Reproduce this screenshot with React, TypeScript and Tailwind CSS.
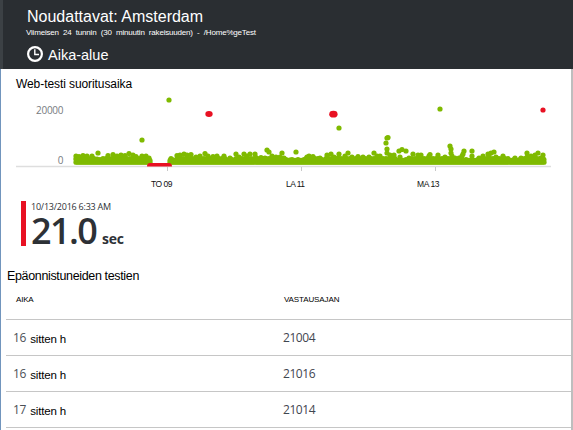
const ARIAL = "font-['Liberation_Sans',Arial,sans-serif]";
const SEGOE = "font-['Open_Sans','Noto_Sans',sans-serif]";

// Upper edge of the dense band of passing samples: [x, y]
const bumps: [number, number][] = [
  [76, 156], [79, 156.5], [83, 155.5], [87, 156], [92, 156], [98, 153], [97, 159], [103, 158.5], [108, 155.5], [113, 154.5],
  [117, 156], [121, 155], [125, 155.5], [129, 153.5], [133, 155], [136, 156.5], [142, 156], [146, 156], [149, 158],
  [171, 158.5], [177, 155.5], [180, 155], [184, 154], [187, 155], [191, 154.5], [196, 157], [200, 156], [205, 153.5],
  [208, 156], [213, 156.5], [217, 156], [224, 156], [230, 158], [236, 154], [239, 157], [244, 154], [247, 156],
  [250, 154], [255, 154], [256, 157.5], [261, 157.5], [265, 158], [267, 150], [269, 152], [272, 156], [276, 157],
  [282, 153], [280, 157], [284, 158], [296, 152], [290, 160], [307, 157], [309, 156], [313, 156.5], [320, 158],
  [327, 155], [331, 154], [334, 157], [339, 154], [338, 158], [345, 156], [348, 153], [352, 157], [358, 156.5],
  [363, 157], [369, 157], [374, 153], [377, 156], [380, 156], [386, 143], [387, 138], [388, 137.5], [387, 149], [387, 153],
  [390, 155], [394, 155], [399, 151], [402, 149.5], [406, 151], [400, 157], [409, 158], [413, 154], [418, 155],
  [421, 155], [429, 156], [430, 154.5], [438, 155], [445, 157], [450, 146], [451, 149], [451, 153], [452, 156],
  [455, 158], [459, 158], [463, 154], [464, 151], [462, 156], [472, 151], [472, 156], [479, 158], [483, 156],
  [488, 154], [491, 153], [494, 152], [489, 156], [496, 157], [503, 156], [515, 158], [521, 158], [527, 153],
  [527, 157], [531, 156], [535, 155], [538, 153], [543, 155], [541, 158],
];

const outliers: [number, number][] = [[169, 100], [142, 140], [339, 128], [440, 109]];

const range = (from: number, to: number, step: number) =>
  Array.from({ length: Math.floor((to - from) / step) + 1 }, (_, i) => from + i * step);

const band = [...range(76, 150, 2), ...range(170, 544, 2)];

// Taller stretches, where the samples fill the space up to the bumps
const dense = [...range(76, 94, 3), ...range(106, 149, 3), ...range(177, 226, 3), ...range(236, 286, 3),
  ...range(306, 318, 3), ...range(326, 396, 3), ...range(412, 455, 3), ...range(484, 508, 3), ...range(522, 544, 3)];

const rows = [
  { n: "16", value: "21004" },
  { n: "16", value: "21016" },
  { n: "17", value: "21014" },
];

function Header() {
  return (
    <header className={`h-[69px] border-l-[3px] border-[#3c4145] bg-[#2a2e32] pl-6 pt-2 text-white ${ARIAL}`}>
      <h1 className="h-[18px] whitespace-nowrap text-[16px] leading-[18px]">Noudattavat: Amsterdam</h1>
      <p className="-ml-px h-[14px] whitespace-nowrap text-[8px] leading-[13px] tracking-[-0.19px] [word-spacing:2.2px]">
        Viimeisen 24 tunnin (30 minuutin rakeisuuden) - /Home%geTest
      </p>
      <div className="mt-1 flex h-5 items-center gap-[5px]">
        <svg width="16" height="20" viewBox="0 0 16 20" fill="none" stroke="white">
          <circle cx="8" cy="10" r="6.9" strokeWidth="2.2" />
          <path d="M7.8 5.2V10.5H12" strokeWidth="1.4" />
        </svg>
        <span className="whitespace-nowrap pt-0.5 text-[14.5px] leading-5">Aika-alue</span>
      </div>
    </header>
  );
}

function Chart() {
  return (
    <svg className="block" width="570" height="98" viewBox="1 92 570 98">
      <g fill="#777b80" className={`text-[10px] ${SEGOE}`} textAnchor="end">
        <text x="63.5" y="114" textLength="27.5">20000</text>
        <text x="63.5" y="164">0</text>
      </g>
      <path d="M16 166.5H551" stroke="#dedede" strokeWidth="1.5" />
      <path d="M167.5 167V171M301.5 167V171M435.5 167V171" stroke="#c8c8c8" />
      <g fill="#7fba00">
        {band.map((x, i) => (
          <g key={x}>
            <circle cx={x} cy={162.2} r="2.6" />
            <circle cx={x} cy={i % 3 ? 160.2 : 159.6} r="2.5" />
          </g>
        ))}
        {dense.map((x) => (
          <circle key={x} cx={x} cy={158.5} r="2.5" />
        ))}
        {[...bumps, ...outliers].map(([x, y], i) => (
          <circle key={i} cx={x} cy={y} r="2.6" />
        ))}
      </g>
      <g fill="#e81123">
        <path d="M147 166.5Q147 163 150 163H169Q172 163 172 166.5Z" />
        <ellipse cx="209" cy="114" rx="3.7" ry="3" />
        <ellipse cx="333.4" cy="114.2" rx="4.2" ry="3.4" />
        <circle cx="543" cy="110" r="2.6" />
      </g>
      <g fill="#111" className={`text-[8.5px] ${ARIAL}`}>
        <text x="151" y="186.5" textLength="21.5">TO 09</text>
        <text x="286" y="187" textLength="19">LA 11</text>
        <text x="417" y="186.5" textLength="22.5">MA 13</text>
      </g>
    </svg>
  );
}

export default function App() {
  return (
    <div className="h-[430px] w-[573px] overflow-hidden bg-white text-black">
      <Header />
      <main className="h-[361px] border-l border-r-2 border-l-[#7195bd] border-r-[#bebebe]">
        <h2 className={`h-[23px] whitespace-nowrap pl-[15px] pt-2 text-[12px] leading-[14px] tracking-[-0.08px] ${ARIAL}`}>
          Web-testi suoritusaika
        </h2>
        <Chart />
        <section className="flex h-[79px] pl-5 pt-[11px]">
          <div className="h-[45px] w-[5px] bg-[#e81123]" />
          <div className={`whitespace-nowrap pl-[5px] text-[#2d3136] ${SEGOE}`}>
            <div className="h-[12px] text-[9px] leading-[12px] tracking-[-0.23px]">10/13/2016 6:33 AM</div>
            <div className="flex h-[34px] items-baseline leading-[35px]">
              <span className="w-[71px] text-[36px] font-semibold tracking-[-1.6px]">21.0</span>
              <span className="text-[14px] font-bold tracking-[-0.2px]">sec</span>
            </div>
          </div>
        </section>
        <h2 className={`h-[24px] whitespace-nowrap pl-1.5 text-[12.5px] leading-[15px] tracking-[-0.35px] ${ARIAL}`}>
          Epäonnistuneiden testien
        </h2>
        <div className="pl-[5px]">
          <div className={`grid h-[27px] grid-cols-[268px_1fr] border-b border-[#c6c6c6] pl-2.5 pt-0.5 text-[8px] leading-[10px] ${ARIAL}`}>
            <span className="tracking-[-0.2px]">AIKA</span>
            <span className="tracking-[-0.12px]">VASTAUSAJAN</span>
          </div>
          {rows.map((row) => (
            <div key={row.value} className="grid h-9 grid-cols-[270px_1fr] items-center border-b border-[#c6c6c6] pl-[7px]">
              <div className="flex items-center gap-[4px] whitespace-nowrap">
                <span className={`text-[12px] tracking-[-0.3px] text-[#4b4f55] ${SEGOE}`}>{row.n}</span>
                <span className={`pt-[5px] text-[11.5px] tracking-[-0.15px] ${ARIAL}`}>sitten h</span>
              </div>
              <span className={`pt-px text-[12px] tracking-[-0.45px] text-[#3f4650] ${SEGOE}`}>{row.value}</span>
            </div>
          ))}
        </div>
      </main>
    </div>
  );
}
